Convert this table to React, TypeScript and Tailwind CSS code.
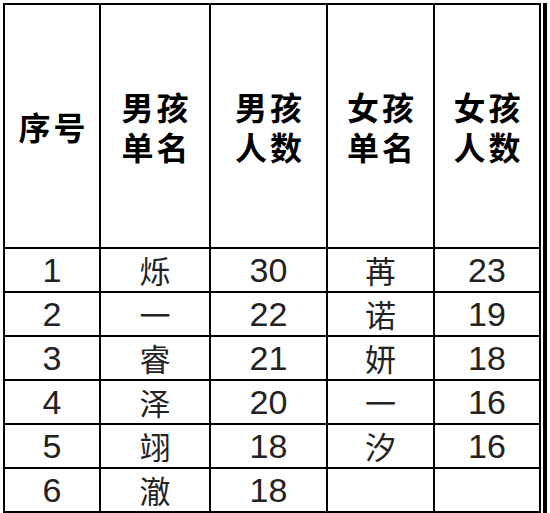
const cols = [
  { w: "w-[96px]", head: ["序号"] },
  { w: "w-[110px]", head: ["男孩", "单名"] },
  { w: "w-[117px]", head: ["男孩", "人数"] },
  { w: "w-[107px]", head: ["女孩", "单名"] },
  { w: "w-[106px]", head: ["女孩", "人数"] },
];

const rows = [
  ["1", "烁", "30", "苒", "23"],
  ["2", "一", "22", "诺", "19"],
  ["3", "睿", "21", "妍", "18"],
  ["4", "泽", "20", "一", "16"],
  ["5", "翊", "18", "汐", "16"],
  ["6", "澈", "18", "", ""],
];

const cjk = "font-['Noto_Sans_CJK_SC',sans-serif]";
const num = "font-['Liberation_Sans_Narrow','Liberation_Sans','Noto_Sans_CJK_SC',sans-serif]";

export default function App() {
  return (
    <div className="w-[550px] h-[513px] overflow-hidden bg-white flex pt-[3px] pl-[3px]">
      <div className="flex flex-col border-l-2 border-t-2 border-black h-[560px]">
        <div className="flex">
          {cols.map((c, i) => (
            <div
              key={i}
              className={`${c.w} h-[244px] border-r-2 border-b-2 border-black flex items-center justify-center text-center text-black text-[32px] leading-[40px] font-bold tracking-[3px] pl-[3px] ${cjk}`}
            >
              <span>
                {c.head[0]}
                {c.head[1] && <br />}
                {c.head[1]}
              </span>
            </div>
          ))}
        </div>
        {rows.map((r, ri) => (
          <div key={ri} className="flex">
            {r.map((v, ci) => (
              <div
                key={ci}
                className={`${cols[ci].w} h-[44px] border-r-2 border-b-2 border-black flex items-center justify-center text-[#222] ${
                  ci % 2 === 1 ? `${cjk} text-[31px]` : `${num} text-[34px]`
                }`}
              >
                {v}
              </div>
            ))}
          </div>
        ))}
      </div>
      <div className="ml-[2px] w-[4px] h-[560px] bg-black" />
    </div>
  );
}
